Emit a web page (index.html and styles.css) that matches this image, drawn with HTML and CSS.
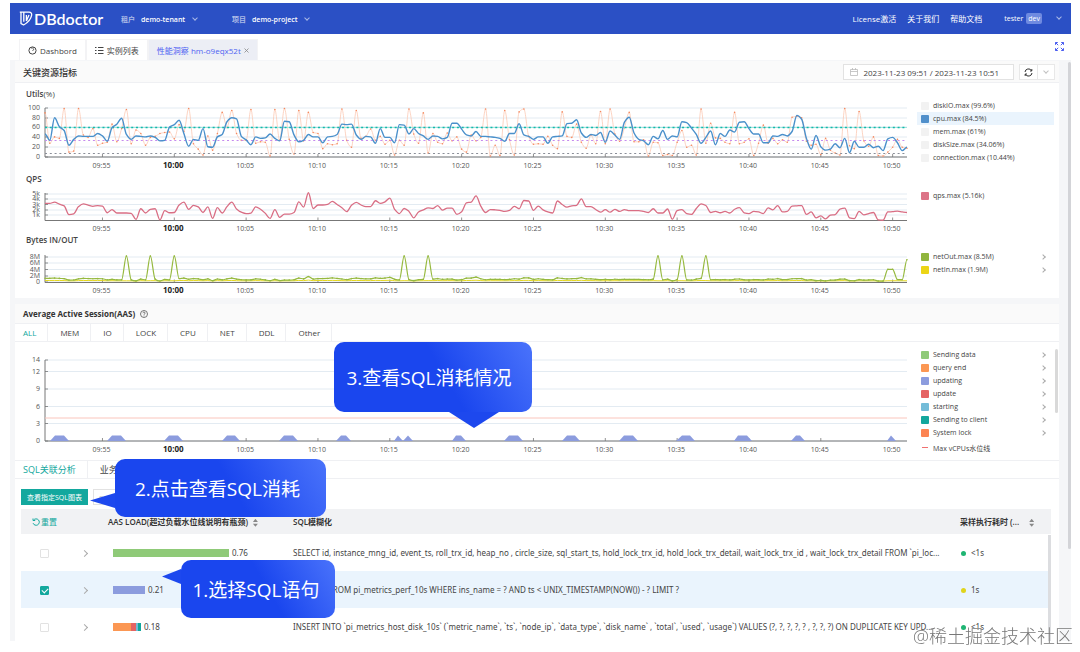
FILE: index.html
```html
<!DOCTYPE html>
<html lang="zh-CN">
<head>
  <meta charset="UTF-8" />
  <meta name="viewport" content="width=device-width, initial-scale=1.0"/>
  <title>DBdoctor</title>
  <link rel="stylesheet" href="styles.css">
</head>
<body>
  <div class="app">
    <header class="topbar">
      <a class="logo" href="#">
        <svg width="14" height="15" viewBox="0 0 14 15" fill="none" stroke="#fff" stroke-width="1.3"><path d="M.8 1.2h4v9.6M4.8 1.2h5.2c2.2 0 3 1.4 2.6 3.2-.8 4-3.2 7-8 9.6M2 1.5v11l2.6 1.5M7.4 4v6M10 4 7.4 10"/></svg>
        <span>DBdoctor</span>
      </a>
      <button class="picker" type="button"><span class="dim">租户</span>demo-tenant<i class="caret"></i></button>
      <button class="picker project" type="button"><span class="dim">项目</span>demo-project<i class="caret"></i></button>
      <nav class="toplinks">
        <a href="#">License激活</a>
        <a href="#">关于我们</a>
        <a href="#">帮助文档</a>
        <button class="user" type="button">tester<span class="badge">dev</span><i class="caret"></i></button>
      </nav>
    </header>

    <nav class="tabs">
      <a href="#"><svg width="9" height="9" viewBox="0 0 9 9" fill="none" stroke="#444"><circle cx="4.5" cy="4.5" r="3.6"/><path d="M4.5 5 6 3M3 2h3" stroke-width=".8"/></svg>Dashbord</a>
      <a href="#"><svg width="9" height="9" viewBox="0 0 9 9" stroke="#444"><path d="M0 1.5h1.5M0 4.5h1.5M0 7.5h1.5M3 1.5h5.5M3 4.5h5.5M3 7.5h5.5"/></svg>实例列表</a>
      <a href="#" class="active">性能洞察 hm-o9eqx52t<svg class="close" width="5" height="5" viewBox="0 0 5 5" stroke="#888" stroke-width=".8"><path d="M.5.5l4 4M4.5.5l-4 4"/></svg></a>
      <button class="expand" type="button" aria-label="全屏"><svg width="9" height="9" viewBox="0 0 9 9" fill="none" stroke="#4a5cf0"><path d="M.5 2.8V.5h2.3M6.2.5h2.3v2.3M8.5 6.2v2.3H6.2M2.8 8.5H.5V6.2M.5.5l2.7 2.7M8.5.5 5.8 3.2M8.5 8.5 5.8 5.8M.5 8.5l2.7-2.7"/></svg></button>
    </nav>

    <main>
      <i class="page-scroll"></i>
      <section class="card">
        <div class="card-head">
          <h2>关键资源指标</h2>
          <button class="range" type="button"><svg width="8" height="8" viewBox="0 0 8 8" fill="none" stroke="#bbb" stroke-width=".8"><path d="M.5 1.5h7v6h-7zM.5 3.5h7M2.5 0v2M5.5 0v2"/></svg>2023-11-23 09:51 / 2023-11-23 10:51</button>
          <div class="refresh">
            <button type="button" aria-label="刷新"><svg width="9" height="9" viewBox="0 0 9 9" fill="none" stroke="#333"><path d="M1 4a3.5 3.5 0 0 1 6.6-1.2M8 5a3.5 3.5 0 0 1-6.6 1.2M7.8 1v2H6M1.2 8V6H3"/></svg></button>
            <button type="button" aria-label="间隔"><i class="caret"></i></button>
          </div>
        </div>

        <div class="metric first">
          <div>
            <h3>Utils<span>(%)</span></h3>
            <svg class="chart" id="utils" viewBox="15 102 897 69"></svg>
          </div>
          <ul class="legend">
            <li><i class="sw off"></i>diskIO.max (99.6%)</li>
            <li class="on"><i class="sw cpu"></i>cpu.max (84.5%)</li>
            <li><i class="sw off"></i>mem.max (61%)</li>
            <li><i class="sw off"></i>diskSize.max (34.06%)</li>
            <li><i class="sw off"></i>connection.max (10.44%)</li>
          </ul>
        </div>
        <div class="metric">
          <div>
            <h3>QPS</h3>
            <svg class="chart" id="qps" viewBox="15 187 897 45"></svg>
          </div>
          <ul class="legend">
            <li><i class="sw qps"></i>qps.max (5.16k)</li>
          </ul>
        </div>
        <div class="metric">
          <div>
            <h3>Bytes IN/OUT</h3>
            <svg class="chart" id="bytes" viewBox="15 248 897 50"></svg>
          </div>
          <ul class="legend">
            <li><i class="sw out"></i>netOut.max (8.5M)<i class="arrow"></i></li>
            <li><i class="sw in"></i>netIn.max (1.9M)<i class="arrow"></i></li>
          </ul>
        </div>
      </section>

      <section class="card sessions">
        <div class="aas-head">
          <h2>Average Active Session(AAS)</h2>
          <svg width="8" height="8" viewBox="0 0 8 8" fill="none" stroke="#555" stroke-width=".8"><circle cx="4" cy="4" r="3.5"/><path d="M2.9 3.2c0-1.5 2.2-1.4 2.2-.1 0 .8-1.1.8-1.1 1.7M4 5.5v.8"/></svg>
        </div>
        <nav class="subtabs">
          <a href="#" class="active">ALL</a><a href="#">MEM</a><a href="#">IO</a><a href="#">LOCK</a><a href="#">CPU</a><a href="#">NET</a><a href="#">DDL</a><a href="#">Other</a>
        </nav>
        <div class="metric aas">
          <div><svg class="chart" id="aas" viewBox="15 342 897 118"></svg></div>
          <ul class="legend">
            <li><i class="sw sending"></i>Sending data<i class="arrow"></i></li>
            <li><i class="sw query"></i>query end<i class="arrow"></i></li>
            <li><i class="sw updating"></i>updating<i class="arrow"></i></li>
            <li><i class="sw update"></i>update<i class="arrow"></i></li>
            <li><i class="sw starting"></i>starting<i class="arrow"></i></li>
            <li><i class="sw client"></i>Sending to client<i class="arrow"></i></li>
            <li><i class="sw lock"></i>System lock<i class="arrow"></i></li>
            <li class="line"><i class="dash"></i>Max vCPUs水位线</li>
          </ul>
          <i class="legend-scroll"></i>
          <div class="callout three">3.查看SQL消耗情况</div>
        </div>

        <nav class="subtabs sql">
          <a href="#" class="active">SQL关联分析</a><a href="#">业务</a>
        </nav>
        <div class="toolbar">
          <button class="primary" type="button">查看指定SQL图表</button>
          <button class="ghost" type="button">SQL</button>
          <div class="callout two">2.点击查看SQL消耗</div>
        </div>

        <div class="table-wrap">
          <table>
            <colgroup><col class="c-check"><col class="c-open"><col class="c-load"><col><col class="c-time"></colgroup>
            <thead>
              <tr>
                <th><button class="reset" type="button"><svg width="8" height="8" viewBox="0 0 8 8" fill="none" stroke="#13a89e"><path d="M1.5 2.2a3.2 3.2 0 1 1-.4 3M1 .5v2h2.2"/></svg>重置</button></th>
                <th></th>
                <th>AAS LOAD(超过负载水位线说明有瓶颈)<i class="sort"></i></th>
                <th>SQL模糊化</th>
                <th>采样执行耗时 (...<i class="sort wide"></i></th>
              </tr>
            </thead>
            <tbody>
              <tr>
                <td><input type="checkbox" aria-label="SELECT"></td>
                <td><i class="arrow"></i></td>
                <td><div class="load"><i class="bar green" style="width:116px"></i>0.76</div></td>
                <td>SELECT id, instance_mng_id, event_ts, roll_trx_id, heap_no , circle_size, sql_start_ts, hold_lock_trx_id, hold_lock_trx_detail, wait_lock_trx_id , wait_lock_trx_detail FROM `pi_loc...</td>
                <td><i class="dot"></i>&lt;1s</td>
              </tr>
              <tr class="selected">
                <td><input type="checkbox" aria-label="SELECT FROM pi_metrics_perf_10s" checked></td>
                <td><i class="arrow"></i></td>
                <td><div class="load"><i class="bar blue" style="width:32px"></i>0.21</div></td>
                <td>SELECT * FROM pi_metrics_perf_10s WHERE ins_name = ? AND ts &lt; UNIX_TIMESTAMP(NOW()) - ? LIMIT ?</td>
                <td><i class="dot warn"></i>1s</td>
              </tr>
              <tr>
                <td><input type="checkbox" aria-label="INSERT"></td>
                <td><i class="arrow"></i></td>
                <td><div class="load"><i class="bar orange" style="width:18px"></i><i class="bar red" style="width:5px"></i><i class="bar sky" style="width:2px"></i><i class="bar teal" style="width:3px"></i>0.18</div></td>
                <td>INSERT INTO `pi_metrics_host_disk_10s` (`metric_name`, `ts`, `node_ip`, `data_type`, `disk_name` , `total`, `used`, `usage`) VALUES (?, ?, ?, ?, ? , ?, ?, ?) ON DUPLICATE KEY UPD...</td>
                <td><i class="dot"></i>&lt;1s</td>
              </tr>
            </tbody>
          </table>
          <i class="table-scroll"></i>
          <div class="callout one">1.选择SQL语句</div>
        </div>
      </section>
    </main>
  </div>
  <div class="watermark">@稀土掘金技术社区</div>
  <script src="charts.js"></script>
</body>
</html>
```
FILE: styles.css
```css
:root {
  --blue: #2b50c5;
  --teal: #13a89e;
  --text: #444;
  --line: #eff0f3;
}
* {
  box-sizing: border-box;
}
body {
  margin: 0;
  background: #fff;
  color: var(--text);
  font-family: "Open Sans", "Noto Sans CJK SC", sans-serif;
  font-size: 8px;
  overflow: hidden;
}
a {
  color: inherit;
  text-decoration: none;
}
button {
  font: inherit;
  color: inherit;
  background: none;
  border: 0;
  padding: 0;
  cursor: pointer;
}
h2, h3, ul {
  margin: 0;
  padding: 0;
}
.app {
  display: flex;
  flex-direction: column;
  height: calc(100vh - 14px);
  margin: 3px 9px 0 10px;
}

/* top bar */
.topbar {
  display: flex;
  align-items: center;
  flex: none;
  height: 31px;
  padding: 0 10px 0 9px;
  background: var(--blue);
  color: #fff;
}
.logo {
  display: flex;
  align-items: center;
  gap: 1px;
  width: 102px;
  font-family: Lato, sans-serif;
  font-size: 16px;
  font-weight: 600;
}
.caret {
  display: inline-block;
  width: 4px;
  height: 4px;
  border: solid currentColor;
  border-width: 0 1px 1px 0;
  transform: rotate(45deg);
  margin: 0 0 2px 8px;
  opacity: .6;
}
.picker {
  width: 111px;
  font-size: 7px;
  font-weight: 600;
  text-align: left;
}
.dim {
  opacity: .6;
  margin-right: 6px;
}
.toplinks {
  display: flex;
  align-items: center;
  gap: 11px;
  margin-left: auto;
}
.user {
  margin-left: 11px;
  font-size: 7px;
}
.badge {
  background: #6f8ae0;
  border-radius: 2px;
  padding: 1px 2px;
  margin-left: 3px;
}
.user .caret {
  margin-left: 15px;
}

/* page tabs */
.tabs {
  display: flex;
  flex: none;
  height: 26px;
  padding: 5px 7px 0 9px;
}
.tabs a {
  display: flex;
  align-items: center;
  gap: 3px;
  padding: 0 8px;
  border: 1px solid #f3f3f5;
  border-bottom: 0;
}
.tabs .active {
  background: #eceef5;
  color: #4f63f2;
}
.tabs .expand {
  margin: 0 0 5px auto;
}

/* cards */
main {
  position: relative;
  flex: 1;
  min-height: 0;
  overflow: hidden;
  padding: 1px 12px 0 5px;
  background: #f5f6f8;
}
.page-scroll {
  position: absolute;
  top: 2px;
  right: 0;
  width: 3px;
  height: 487px;
  background: #d3d4d8;
  border-radius: 2px;
}
.card {
  background: #fff;
}
.card-head {
  display: flex;
  align-items: center;
  height: 22px;
  padding: 1px 4px 0 8px;
  background: #fafafa;
  border-bottom: 1px solid var(--line);
}
.card-head h2, .aas-head h2 {
  font-size: 8px;
  font-weight: 700;
  color: #333;
}
.card-head h2 {
  font-size: 9px;
  font-weight: 500;
}
.range {
  display: flex;
  align-items: center;
  gap: 5px;
  height: 16px;
  padding: 0 14px 0 6px;
  margin-left: auto;
  background: #fff;
  border: 1px solid #e2e2e2;
}
.refresh {
  display: flex;
  margin-left: 5px;
  border: 1px solid #e8e8e8;
  background: #fff;
}
.refresh button {
  display: flex;
  align-items: center;
  justify-content: center;
  width: 17px;
  height: 14px;
}
.refresh button + button {
  border-left: 1px solid #e8e8e8;
  color: #999;
}
.refresh .caret {
  margin: 0 0 2px;
}
.metric {
  position: relative;
  display: grid;
  grid-template-columns: minmax(0, 1fr) 147px;
}
.metric.first {
  padding-top: 3px;
}
.metric h3 {
  height: 16px;
  padding-left: 11px;
  line-height: 16px;
  font-size: 8px;
  font-weight: 600;
}
.metric h3 span {
  font-weight: 400;
}
.chart {
  display: block;
  width: 100%;
  height: auto;
}
.chart text {
  font-size: 7px;
  fill: #555;
}
.chart .hour {
  font-size: 8px;
  font-weight: 700;
  fill: #222;
}

/* legends */
.legend {
  list-style: none;
  padding: 18px 5px 0;
  font-size: 7px;
}
.first .legend {
  padding-top: 13px;
}
.aas .legend {
  padding-top: 6px;
}
.legend li {
  display: flex;
  align-items: center;
  height: 13px;
  padding: 0 9px 0 4px;
}
.legend .on {
  background: #eaf4fd;
}
.legend .line {
  height: 17px;
}
.sw {
  width: 8px;
  height: 8px;
  margin-right: 4px;
  border-radius: 1px;
}
.off { background: #f2f2f2; }
.cpu { background: #5190cb; }
.qps { background: #dc7487; }
.out { background: #90b53d; }
.in { background: #ecd516; }
.sending { background: #8fca78; }
.query { background: #fb9753; }
.updating { background: #8c9cde; }
.update { background: #e56363; }
.starting { background: #74bcd8; }
.client { background: #12a79d; }
.lock { background: #fc8452; }
.dash {
  width: 6px;
  margin: 0 5px 0 1px;
  border-top: 1px dashed #f07070;
}
.arrow {
  display: inline-block;
  width: 5px;
  height: 5px;
  border: solid #aaa;
  border-width: 1px 1px 0 0;
  transform: rotate(45deg);
}
.legend .arrow {
  width: 4px;
  height: 4px;
  margin-left: auto;
}
.legend-scroll {
  position: absolute;
  top: 7px;
  right: 1px;
  width: 3px;
  height: 64px;
  background: #d9d9d9;
  border-radius: 2px;
}

/* sessions */
.sessions {
  margin-top: 6px;
}
.aas-head {
  display: flex;
  align-items: center;
  gap: 5px;
  height: 19px;
  padding-left: 8px;
  background: #fafafa;
}
.subtabs {
  display: flex;
  height: 19px;
  border: solid var(--line);
  border-width: 1px 0;
}
.subtabs a {
  padding: 0 11px 0 12px;
  line-height: 17px;
  border-right: 1px solid var(--line);
}
.subtabs a:first-child {
  padding-left: 8px;
}
.subtabs .active {
  color: var(--teal);
}
.sql {
  font-size: 9px;
}
.toolbar {
  position: relative;
  display: flex;
  gap: 5px;
  padding: 10px 6px 4px;
}
.primary {
  height: 16px;
  padding: 0 6px;
  background: var(--teal);
  color: #fff;
  font-size: 7px;
}
.ghost {
  padding: 0 5px;
  color: #bbb;
  border: 1px solid #e2e2e2;
}

/* sql table */
.table-wrap {
  position: relative;
  margin: 0 8px 0 6px;
}
table {
  width: 100%;
  table-layout: fixed;
  border-collapse: collapse;
}
.c-check { width: 50px; }
.c-open { width: 32px; }
.c-load { width: 185px; }
.c-time { width: 96px; }
th {
  height: 25px;
  padding: 0 5px;
  background: #f1f2f4;
  color: #333;
  text-align: left;
  font-weight: 600;
  white-space: nowrap;
}
td {
  height: 37px;
  padding: 0 5px;
  overflow: hidden;
  font-family: "Noto Sans", "Noto Sans CJK SC", sans-serif;
  white-space: nowrap;
}
td:first-child {
  padding-right: 8px;
  text-align: center;
}
td:nth-child(2) {
  padding-left: 11px;
}
.selected td {
  background: #eaf4fd;
}
.reset {
  display: flex;
  align-items: center;
  gap: 1px;
  margin-left: 6px;
  color: var(--teal);
  font-weight: 400;
}
.sort {
  display: inline-block;
  width: 5px;
  height: 8px;
  margin-left: 5px;
  vertical-align: middle;
  background: #888;
  clip-path: polygon(50% 0, 100% 40%, 0 40%, 0 60%, 100% 60%, 50% 100%, 0 60%, 0 40%);
}
.sort.wide {
  margin-left: 10px;
}
input[type=checkbox] {
  appearance: none;
  width: 9px;
  height: 9px;
  margin: 0;
  border: 1px solid #e2e2e2;
  border-radius: 1px;
  vertical-align: middle;
}
input[type=checkbox]:checked {
  position: relative;
  background: var(--teal);
  border-color: var(--teal);
}
input[type=checkbox]:checked::after {
  content: "";
  position: absolute;
  left: 2px;
  top: 0;
  width: 3px;
  height: 5px;
  border: solid #fff;
  border-width: 0 1px 1px 0;
  transform: rotate(45deg);
}
.load {
  display: flex;
  align-items: center;
  padding-left: 5px;
}
.bar {
  height: 8px;
}
.bar:last-of-type {
  margin-right: 3px;
}
.green { background: #8fca78; }
.blue { background: #8c9cde; }
.orange { background: #fb9753; }
.red { background: #e56363; }
.sky { background: #74bcd8; }
.teal { background: #12a79d; }
.dot {
  display: inline-block;
  width: 5px;
  height: 5px;
  margin: 0 5px 1px 1px;
  border-radius: 50%;
  background: #1fb573;
  vertical-align: middle;
}
.warn {
  background: #e0d41c;
}
.table-scroll {
  position: absolute;
  top: 26px;
  right: 0;
  width: 3px;
  bottom: 0;
  background: #dcdde0;
}

/* step callouts */
.callout {
  position: absolute;
  z-index: 2;
  display: flex;
  align-items: center;
  justify-content: center;
  border-radius: 10px;
  background: linear-gradient(60deg, #1a46ee 55%, #4a73fb);
  color: #fff;
  font-size: 19px;
  white-space: nowrap;
}
.callout::after {
  content: "";
  position: absolute;
  background: #1d48ee;
}
.three {
  left: 319px;
  top: 0;
  width: 198px;
  height: 70px;
  padding-right: 8px;
}
.three::after {
  left: 115px;
  top: 100%;
  width: 50px;
  height: 16px;
  clip-path: polygon(0 0, 100% 0, 50% 100%);
}
.two {
  left: 100px;
  top: -20px;
  width: 211px;
  height: 58px;
  padding-right: 6px;
}
.two::after {
  right: 100%;
  top: 34px;
  width: 25px;
  height: 15px;
  clip-path: polygon(100% 0, 100% 100%, 0 50%);
}
.one {
  left: 160px;
  top: 51px;
  width: 154px;
  height: 58px;
  padding-right: 4px;
}
.one::after {
  right: 100%;
  top: 9px;
  width: 19px;
  height: 15px;
  clip-path: polygon(100% 0, 100% 100%, 0 50%);
}
.watermark {
  position: fixed;
  right: 7px;
  bottom: 4px;
  color: #777;
  font-size: 18px;
  font-weight: 300;
  text-shadow: 0 0 1px #fff;
}
```
FILE: charts.js
```js
const LEFT = 45, RIGHT = 907;
const STEP = (RIGHT - LEFT) / 180; // one sample every 20s

const cpu = [47,34,80,62,54,24,36,43,42,42,42,48,43,32,60,67,79,46,36,43,42,41,43,40,33,34,61,66,75,48,22,36,34,58,21,20,41,46,72,80,78,42,35,25,41,38,39,47,38,33,73,72,45,31,34,46,41,41,29,41,42,46,67,66,67,45,36,42,41,28,58,40,40,29,66,65,47,58,48,43,36,43,42,37,40,69,69,57,45,43,52,42,42,41,40,38,32,48,48,68,45,42,36,41,41,28,41,42,43,68,69,76,49,40,46,44,50,30,53,45,36,71,81,49,36,33,25,42,37,54,36,43,41,72,70,59,46,28,40,53,25,48,42,55,51,71,72,58,47,47,29,29,43,42,46,43,52,85,77,38,16,44,21,14,16,27,19,38,9,32,20,20,26,19,22,13,37,40,29,13,20];
const disk = [90,28,41,38,99,10,12,99,45,40,58,24,28,30,67,31,58,97,27,55,48,24,40,42,48,50,51,37,66,52,99,27,16,4,43,14,48,91,60,95,48,34,34,97,28,31,30,2,97,34,99,36,6,95,33,91,50,48,17,27,25,27,98,34,20,95,38,42,57,34,42,26,34,4,34,24,98,47,28,90,8,48,30,27,49,33,41,16,10,45,33,40,98,2,24,3,95,35,4,92,98,42,26,27,26,42,24,17,92,42,40,67,30,18,45,27,93,27,98,47,32,60,91,31,31,35,2,30,29,3,5,3,30,54,20,24,4,98,28,69,39,38,30,27,91,27,30,37,3,28,65,28,38,27,35,30,81,83,80,32,24,26,5,38,14,8,4,99,23,17,93,33,22,41,3,2,10,20,36,20,18];
const qps = [64,64,69,61,55,22,25,52,62,58,53,56,54,29,41,28,28,28,27,4,44,28,42,44,2,37,29,30,58,69,42,57,51,30,51,8,48,28,52,69,43,31,26,28,51,42,27,8,41,12,24,24,30,70,50,104,45,58,58,60,72,60,48,33,57,68,58,52,52,74,64,70,84,42,26,45,34,10,32,40,47,45,56,39,46,46,23,33,66,69,92,54,30,41,40,38,34,38,53,44,75,73,38,54,40,32,28,73,60,50,55,57,81,52,52,41,31,41,31,42,34,41,37,37,37,34,30,44,28,28,43,5,37,41,26,23,45,62,56,30,34,29,34,28,42,48,29,26,34,32,26,47,40,56,32,34,54,55,56,23,32,10,17,6,20,22,43,46,10,7,34,21,26,30,2,1,32,33,35,32,30];

const netOut = qps.map(v => 0.3 + v * 0.014);
[17, 22, 27, 75, 80, 128, 133, 138].forEach(i => netOut[i] = 8.4);
[176, 177].forEach(i => netOut[i] = 4.1);
netOut[180] = 7.2;
const netIn = qps.map(v => 0.3 + v * 0.003);

// [left, top left, top right, right]
const sessions = [[50,55,64,69],[107,112,121,126],[164,169,178,183],[222,227,235,240],[279,284,293,298],[336,341,346,351],[394,398,398,403],[403,408,408,413],[452,456,461,466],[504,509,518,523],[562,567,575,580],[619,624,633,638],[676,682,690,695],[734,738,747,752],[791,796,800,805],[887,891,891,896]];

const px = i => LEFT + i * STEP;

function line(x1, y1, x2, y2, color, extra = "") {
  return `<line x1="${x1}" y1="${y1}" x2="${x2}" y2="${y2}" stroke="${color}" ${extra}/>`;
}

// smooth curve that stays flat on local peaks
function curve(ys) {
  const m = ys.map((y, i) => {
    if (i === 0 || i === ys.length - 1) return 0;
    const a = y - ys[i - 1], b = ys[i + 1] - y;
    return a * b <= 0 ? 0 : 2 * a * b / (a + b);
  });
  let d = `M${px(0)} ${ys[0]}`;
  for (let i = 1; i < ys.length; i++) {
    d += `C${px(i - 1) + STEP / 3} ${ys[i - 1] + m[i - 1] / 3} ${px(i) - STEP / 3} ${ys[i] - m[i] / 3} ${px(i)} ${ys[i]}`;
  }
  return d;
}

function path(ys, color, width) {
  return `<path d="${curve(ys)}" fill="none" stroke="${color}" stroke-width="${width}"/>`;
}

function axes(top, bottom, ticks, labelGap) {
  let s = "";
  ticks.forEach(([y, label]) => {
    s += line(LEFT, y, RIGHT, y, "#e3ebf2");
    s += line(LEFT, y, LEFT + 3, y, "#777", 'stroke-width=".8"');
    s += `<text x="40" y="${y + 2}" text-anchor="end">${label}</text>`;
  });
  s += line(LEFT, top, LEFT, bottom, "#777");
  s += line(LEFT, bottom, RIGHT, bottom, "#777");
  for (let k = 0; k < 12; k++) {
    const min = 55 + k * 5;
    const x = px(12 + k * 15);
    const label = (min < 60 ? "09:" : "10:") + String(min % 60).padStart(2, "0");
    s += line(x, bottom - 3, x, bottom, "#777", 'stroke-width=".8"');
    s += `<text x="${x - 1}" y="${bottom + labelGap}" text-anchor="middle"${k === 1 ? ' class="hour"' : ""}>${label}</text>`;
  }
  return s;
}

function dots(ys, color) {
  return ys.map((y, i) => `<circle cx="${px(i)}" cy="${y}" r=".8" fill="${color}"/>`).join("");
}

const util = v => 157 - v * 0.49;
const diskY = disk.map(util);
document.getElementById("utils").innerHTML =
  axes(108, 157, [[108, 100], [118, 80], [127, 60], [137, 40], [147, 20], [157, 0]], 11) +
  path(diskY, "#fbc9b4", 0.8) + dots(diskY, "#f5895f") +
  line(LEFT, 127.5, RIGHT, 127.5, "#a5e6df") +
  line(LEFT, 127.5, RIGHT, 127.5, "#14b8aa", 'stroke-width="1.6" stroke-dasharray="2 2.79"') +
  line(LEFT, 140.5, RIGHT, 140.5, "#c58bee", 'stroke-width="1.2" stroke-dasharray="2 2.79"') +
  line(LEFT, 153.5, RIGHT, 153.5, "#8a8e98", 'stroke-width="1.2" stroke-dasharray="2 2.79"') +
  path(cpu.map(util), "#4a90cb", 1.4);

document.getElementById("qps").innerHTML =
  axes(193, 220.5, [[194, "5k"], [199, "4k"], [204.5, "3k"], [210, "2k"], [215, "1k"]], 10) +
  path(qps.map(v => 220.5 - v * 0.267), "#d96e84", 1.3);

const net = v => 282 - v * 3.1;
document.getElementById("bytes").innerHTML =
  axes(255, 282.5, [[257, "8M"], [263, "6M"], [269.5, "4M"], [276, "2M"], [282, "0"]], 10) +
  path(netIn.map(net), "#e6d81e", 1) +
  path(netOut.map(net), "#96b93f", 1.2) + dots(netOut.map(net), "#96b93f");

document.getElementById("aas").innerHTML =
  axes(360, 441, [[360, 14], [371.5, 12], [389, 9], [406.5, 6], [423.5, 3], [441, 0]], 11) +
  sessions.map(([a, b, c, d]) => `<polygon points="${a},441 ${b},435.5 ${c},435.5 ${d},441" fill="#8c9cde"/>`).join("") +
  line(LEFT, 418, RIGHT, 418, "#fac5bc");
```
